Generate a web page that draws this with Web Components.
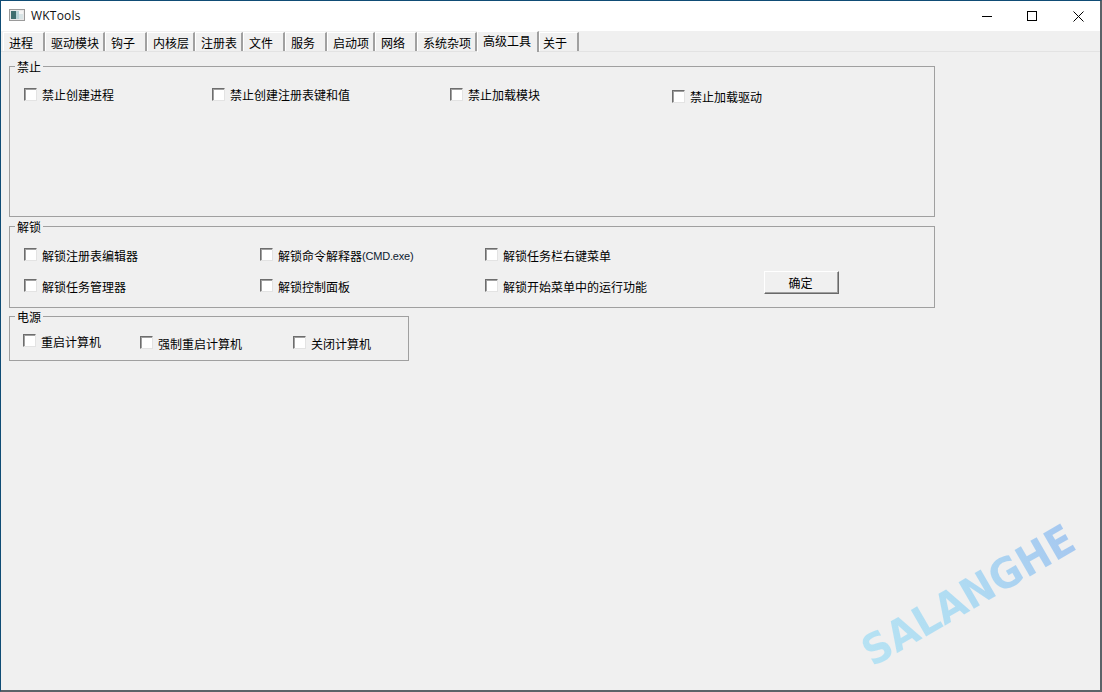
<!DOCTYPE html>
<html>
<head>
<meta charset="utf-8">
<style>
html, body { margin: 0; height: 100%; }
body { font: 12px "Noto Sans CJK SC", "Noto Sans", sans-serif; color: #000; overflow: hidden; }
</style>
</head>
<body>
<wk-window>
  <wk-tabs></wk-tabs>
  <wk-group label="禁止" style="width:926px;height:151px;margin:14px 0 0 8px">
    <wk-row style="padding:19px 0 0 14px;--box-y:-1px">
      <wk-check width="188">禁止创建进程</wk-check>
      <wk-check width="238">禁止创建注册表键和值</wk-check>
      <wk-check width="222">禁止加载模块</wk-check>
      <wk-check style="margin-top:2px">禁止加载驱动</wk-check>
    </wk-row>
  </wk-group>
  <wk-group label="解锁" style="width:926px;height:82px;margin:9px 0 0 8px">
    <wk-row style="padding:20px 0 0 14px">
      <wk-check width="236">解锁注册表编辑器</wk-check>
      <wk-check width="225">解锁命令解释器<span style="font:11px 'Liberation Sans',sans-serif;letter-spacing:-.2px;color:#0c1a30;vertical-align:1px">(CMD.exe)</span></wk-check>
      <wk-check>解锁任务栏右键菜单</wk-check>
    </wk-row>
    <wk-row style="padding:14px 0 0 14px;align-items:center">
      <wk-check width="236">解锁任务管理器</wk-check>
      <wk-check width="225">解锁控制面板</wk-check>
      <wk-check width="279">解锁开始菜单中的运行功能</wk-check>
      <wk-button style="margin-top:-8px">确定</wk-button>
    </wk-row>
  </wk-group>
  <wk-group label="电源" style="width:400px;height:45px;margin:8px 0 0 8px">
    <wk-row style="padding:16px 0 0 13px">
      <wk-check width="117">重启计算机</wk-check>
      <wk-check width="153" style="margin-top:2px">强制重启计算机</wk-check>
      <wk-check style="margin-top:2px">关闭计算机</wk-check>
    </wk-row>
  </wk-group>
</wk-window>
<script>
class WkWindow extends HTMLElement {
  constructor() {
    super();
    const root = this.attachShadow({mode: "open"});
    root.innerHTML = `
      <style>
        :host { display: flex; flex-direction: column; box-sizing: border-box; width: 1102px; height: 692px; position: relative;
                border: 1px solid #0f4c75; border-right: 2px solid #5a6268; border-bottom: 2px solid #5a6268; background: #f0f0f0; }
        .title { display: flex; align-items: center; height: 30px; background: #fff; flex: none; }
        .icon { margin: -2px 0 0 8px; display: block; }
        .name { margin: -2px 0 0 6px; font: 12px "Open Sans", "Noto Sans", sans-serif; color: #111; letter-spacing: .2px; }
        .btns { margin-left: auto; display: flex; }
        .btns svg { display: block; width: 45px; height: 30px; }
        .mark { position: absolute; left: 854px; top: 636px; font: 700 42px/1 "DejaVu Sans", sans-serif; white-space: nowrap;
                transform: rotate(-30deg) scaleX(.93); transform-origin: 0 0;
                background: linear-gradient(90deg, #b6e2f3, #b0dcf2 45%, #a6c8f0); -webkit-background-clip: text; background-clip: text; color: transparent; }
      </style>
      <div class="title">
        <svg class="icon" width="16" height="14" viewBox="0 0 16 14">
          <rect x=".5" y="1.5" width="15" height="11" fill="#e8e8e8" stroke="#9a9a9a"/>
          <rect x="2" y="3" width="5" height="8" fill="#3f6f6f"/>
          <rect x="7" y="3" width="3" height="8" fill="#b9d3d6"/>
          <rect x="10" y="3" width="4" height="3" fill="#f4f4f4"/>
          <rect x="10" y="6" width="4" height="5" fill="#d9e4e6"/>
        </svg>
        <span class="name">WKTools</span>
        <div class="btns">
          <svg viewBox="0 0 45 30"><path d="M17 15.5h10" stroke="#000"/></svg>
          <svg viewBox="0 0 45 30"><rect x="17.5" y="10.5" width="9" height="9" fill="none" stroke="#000"/></svg>
          <svg viewBox="0 0 45 30"><path d="M18.5 10.5l10 10M28.5 10.5l-10 10" stroke="#000" fill="none"/></svg>
        </div>
      </div>
      <slot></slot>
      <div class="mark">SALANGHE</div>`;
  }
}

const TABS = [
  ["进程", 42], ["驱动模块", 60], ["钩子", 42], ["内核层", 48], ["注册表", 48], ["文件", 42],
  ["服务", 42], ["启动项", 48], ["网络", 42], ["系统杂项", 60], ["高级工具", 62], ["关于", 40]
];

class WkTabs extends HTMLElement {
  constructor() {
    super();
    const root = this.attachShadow({mode: "open"});
    const items = TABS.map(([t, w], i) =>
      `<div class="tab${i == 10 ? " on" : ""}${i == 11 ? " after" : ""}" style="width:${w}px">${t}</div>`).join("");
    root.innerHTML = `
      <style>
        :host { display: flex; height: 20px; padding-left: 2px; background: #f0f0f0; border-bottom: 1px solid #e3e3e3; flex: none; }
        .tab { box-sizing: border-box; height: 19px; margin-top: 1px; padding: 1px 0 0 5px; line-height: 17px;
               border-left: 1px solid #fff; border-top: 1px solid #fff; border-right: 2px solid #a0a0a0; }
        .on { margin-top: 0; height: 21px; padding-top: 0; background: #f0f0f0; position: relative; z-index: 1; }
        .after { padding-left: 3px; }
      </style>
      ${items}`;
  }
}

class WkGroup extends HTMLElement {
  constructor() {
    super();
    const root = this.attachShadow({mode: "open"});
    root.innerHTML = `
      <style>
        :host { display: block; box-sizing: border-box; position: relative; border: 1px solid #a0a0a0; flex: none; }
        .lab { position: absolute; left: 5px; top: -8px; padding: 0 2px; height: 16px; line-height: 16px; background: #f0f0f0; }
      </style>
      <span class="lab">${this.getAttribute("label")}</span>
      <slot></slot>`;
  }
}

class WkRow extends HTMLElement {
  constructor() {
    super();
    const root = this.attachShadow({mode: "open"});
    root.innerHTML = `
      <style>:host { display: flex; align-items: flex-start; }</style>
      <slot></slot>`;
  }
}

class WkCheck extends HTMLElement {
  constructor() {
    super();
    const root = this.attachShadow({mode: "open"});
    const w = this.getAttribute("width");
    root.innerHTML = `
      <style>
        :host { display: flex; align-items: center; height: 17px; flex: none; ${w ? `width:${w}px;` : ""} }
        .box { box-sizing: border-box; width: 13px; height: 13px; margin: var(--box-y, -3px) 5px 0 0; background: #fff; flex: none;
               border: 1px solid; border-color: #6d6d6d #e3e3e3 #e3e3e3 #6d6d6d; box-shadow: inset 1px 1px 0 #a0a0a0; }
        .txt { white-space: nowrap; line-height: 17px; }
      </style>
      <span class="box"></span><span class="txt"><slot></slot></span>`;
  }
}

class WkButton extends HTMLElement {
  constructor() {
    super();
    const root = this.attachShadow({mode: "open"});
    root.innerHTML = `
      <style>
        :host { display: block; box-sizing: border-box; width: 75px; height: 23px; padding-right: 2px; line-height: 22px; text-align: center; background: #f0f0f0; flex: none;
                border: 1px solid; border-color: #fff #696969 #696969 #fff; box-shadow: inset -1px -1px 0 #a0a0a0; }
      </style>
      <slot></slot>`;
  }
}

customElements.define("wk-window", WkWindow);
customElements.define("wk-tabs", WkTabs);
customElements.define("wk-group", WkGroup);
customElements.define("wk-row", WkRow);
customElements.define("wk-check", WkCheck);
customElements.define("wk-button", WkButton);
</script>
</body>
</html>
